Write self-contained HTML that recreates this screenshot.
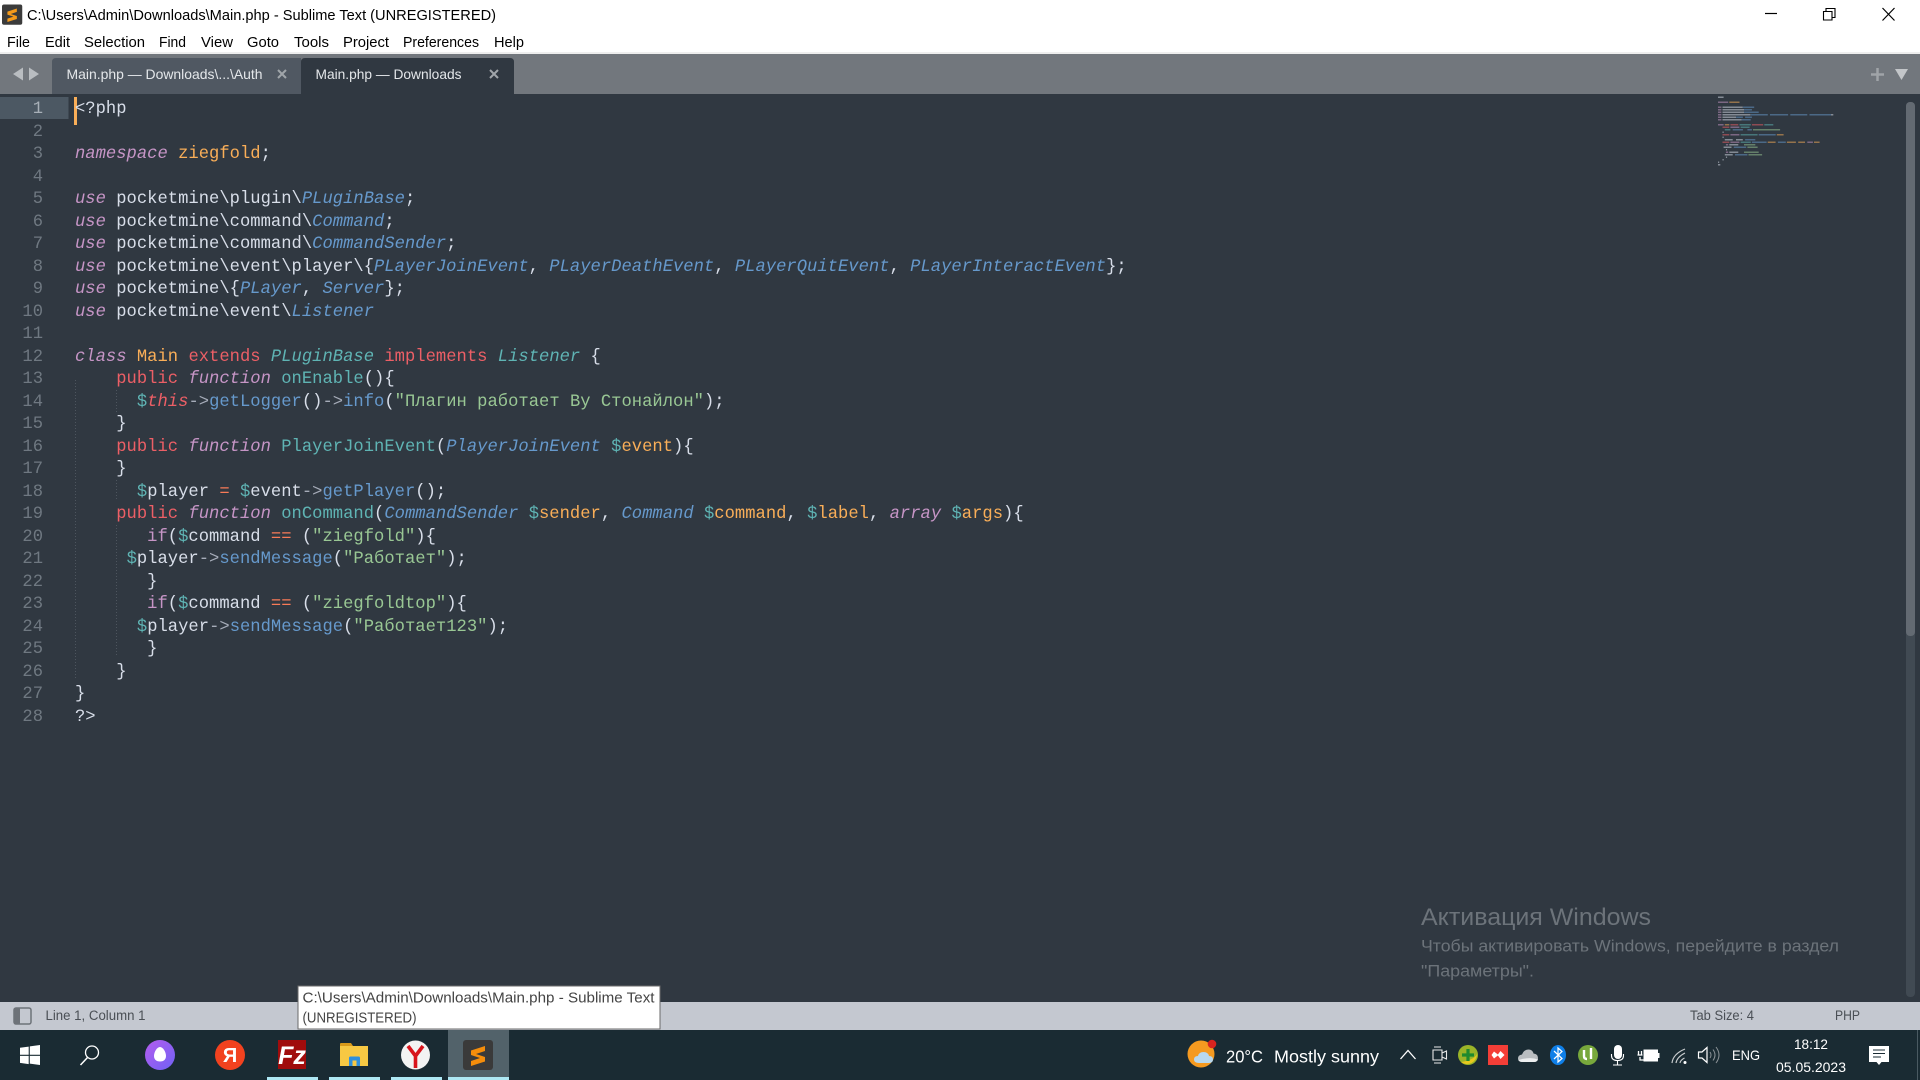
<!DOCTYPE html>
<html lang="ru"><head><meta charset="utf-8"><title>Main.php - Sublime Text</title>
<style>
html,body{margin:0;padding:0;width:1920px;height:1080px;overflow:hidden;background:#303841}
#wrap{position:absolute;left:0;top:0;width:1920px;height:1080px;filter:blur(.35px)}
svg{position:absolute;left:0;top:0}
svg text{font-family:"Liberation Sans","Noto Sans CJK JP",sans-serif}
.l{position:absolute;left:75px;margin-top:2.3px;height:22.5px;white-space:pre;font:17.15px/22.5px "Liberation Mono",monospace;letter-spacing:.024px;color:#d8dee9}
.n{position:absolute;left:0;width:43px;margin-top:2.3px;text-align:right;height:22.5px;font:17.15px/22.5px "Liberation Mono",monospace;color:#6f7881}
.k{color:#c695c6;font-style:italic}.p{color:#c695c6}.b{color:#6699cc;font-style:italic}.f{color:#6699cc}
.t{color:#5fb4b4;font-style:italic}.c{color:#5fb4b4}.r{color:#ec5f66}.ri{color:#ec5f66;font-style:italic}
.o{color:#f9ae58}.g{color:#99c794}.q{color:#f97b58}.a{color:#a6acb9}
</style></head><body><div id="wrap">
<svg width="1920" height="1080" viewBox="0 0 1920 1080">
<rect width="1920" height="52" fill="#fff"/><rect y="52" width="1920" height="2" fill="#eeeeee"/>
<rect y="54" width="1920" height="40" fill="#72777d"/>
<path d="M52 94V62q0-4 4-4H301V94Z" fill="#505862"/>
<path d="M301 94V62q0-4 4-4H510q4 0 4 4V94Z" fill="#303841"/>
<path d="M13 74l10-6.500v13zM39 74l-10-6.500v13z" fill="#b9bdc1"/>
<g fill="#e4e7ea" font-size="14">
<text x="66.500" y="79" textLength="196" lengthAdjust="spacingAndGlyphs">Main.php — Downloads\...\Auth</text>
<text x="315.500" y="79" textLength="146" lengthAdjust="spacingAndGlyphs">Main.php — Downloads</text></g>
<path d="M278 70l8 8m0-8l-8 8M490 70l8 8m0-8l-8 8" stroke="#a0a5aa" stroke-width="2" fill="none"/>
<path d="M1877.500 68v13M1871 74.500h13" stroke="#a0a4a8" stroke-width="2.500"/>
<path d="M1895 69h13l-6.500 11z" fill="#c3c6c9"/>
<!-- title bar -->
<g transform="translate(2,4.500) scale(.675)"><rect width="30" height="30" rx="3" fill="#3b3b3b"/><path d="M8 10.500L22 6V11L13 14L22 17V21.500L8 26V21L17 18L8 15Z" fill="#f59a1a"/></g>
<text x="27" y="20" font-size="14.700" fill="#000" textLength="469" lengthAdjust="spacingAndGlyphs">C:\Users\Admin\Downloads\Main.php - Sublime Text (UNREGISTERED)</text>
<g font-size="14.700" fill="#000">
<text x="7" y="47" textLength="23" lengthAdjust="spacingAndGlyphs">File</text>
<text x="45" y="47" textLength="25" lengthAdjust="spacingAndGlyphs">Edit</text>
<text x="84" y="47" textLength="61" lengthAdjust="spacingAndGlyphs">Selection</text>
<text x="159" y="47" textLength="27" lengthAdjust="spacingAndGlyphs">Find</text>
<text x="201" y="47" textLength="32" lengthAdjust="spacingAndGlyphs">View</text>
<text x="247" y="47" textLength="32" lengthAdjust="spacingAndGlyphs">Goto</text>
<text x="294" y="47" textLength="35" lengthAdjust="spacingAndGlyphs">Tools</text>
<text x="343" y="47" textLength="46" lengthAdjust="spacingAndGlyphs">Project</text>
<text x="403" y="47" textLength="76" lengthAdjust="spacingAndGlyphs">Preferences</text>
<text x="494" y="47" textLength="30" lengthAdjust="spacingAndGlyphs">Help</text></g>
<path d="M1765 13.500h12" stroke="#000" stroke-width="1.200"/>
<path d="M1823.500 11.500h8.500v8.500h-8.500zM1826 11.500V8.500h9v9h-3" fill="none" stroke="#000" stroke-width="1.100"/>
<path d="M1882.500 8l12 12.500m0-12.500l-12 12.500" stroke="#000" stroke-width="1.200"/>
<!-- gutter -->
<rect y="97" width="68.500" height="22" fill="#4c5863"/>
<path d="M75.500 380V680M116.500 390V412M116.500 480V500M116.500 525V657" stroke="#4d555e" stroke-width="1" stroke-dasharray="1 2" fill="none"/>
<rect x="74" y="97" width="3" height="28" fill="#f9ae58"/>
<!-- scrollbar -->
<rect x="1906" y="102" width="9" height="895" rx="4" fill="#414a53"/>
<rect x="1906" y="102" width="9" height="534" rx="4" fill="#636a72"/>
<!-- minimap -->
<g id="mm" opacity=".5" transform="translate(1718,96.500)">
<g fill="#d8dee9"><rect width="5.600" height="1.500"/><rect x="4.500" y="10" width="20.300" height="1.500"/><rect x="4.500" y="12.500" width="21.500" height="1.500"/><rect x="4.500" y="15" width="21.500" height="1.500"/><rect x="4.500" y="17.500" width="28" height="1.500"/><rect x="113" y="17.500" width="2.300" height="1.500"/><rect x="4.500" y="20" width="13.600" height="1.500"/><rect x="4.500" y="22.500" width="19.200" height="1.500"/><rect x="4.500" y="30" width="1.200" height="1.500"/><rect x="4.500" y="35" width="1.200" height="1.500"/><rect x="4.500" y="40" width="1.200" height="1.500"/><rect x="6.800" y="42.500" width="7.900" height="1.500"/><rect x="18" y="42.500" width="6.800" height="1.500"/><rect x="11.300" y="47.500" width="9" height="1.500"/><rect x="5.600" y="50" width="7.900" height="1.500"/><rect x="7.900" y="52.500" width="1.200" height="1.500"/><rect x="11.300" y="55" width="9" height="1.500"/><rect x="6.800" y="57.500" width="7.900" height="1.500"/><rect x="7.900" y="60" width="1.200" height="1.500"/><rect x="4.500" y="62.500" width="1.200" height="1.500"/><rect y="65" width="1.200" height="1.500"/><rect y="67.500" width="2.300" height="1.500"/></g>
<g fill="#c695c6"><rect y="5" width="10.200" height="1.500"/><rect y="10" width="3.400" height="1.500"/><rect y="12.500" width="3.400" height="1.500"/><rect y="15" width="3.400" height="1.500"/><rect y="17.500" width="3.400" height="1.500"/><rect y="20" width="3.400" height="1.500"/><rect y="22.500" width="3.400" height="1.500"/><rect y="27.500" width="5.600" height="1.500"/><rect x="12.400" y="30" width="9" height="1.500"/><rect x="12.400" y="37.500" width="9" height="1.500"/><rect x="12.400" y="45" width="9" height="1.500"/><rect x="89.300" y="45" width="5.600" height="1.500"/><rect x="7.900" y="47.500" width="2.300" height="1.500"/><rect x="7.900" y="55" width="2.300" height="1.500"/></g>
<g fill="#f9ae58"><rect x="11.300" y="5" width="10.200" height="1.500"/><rect x="6.800" y="27.500" width="4.500" height="1.500"/><rect x="58.800" y="37.500" width="6.800" height="1.500"/><rect x="49.700" y="45" width="7.900" height="1.500"/><rect x="68.900" y="45" width="9" height="1.500"/><rect x="80.200" y="45" width="6.800" height="1.500"/><rect x="96" y="45" width="5.600" height="1.500"/></g>
<g fill="#6699cc"><rect x="24.900" y="10" width="11.300" height="1.500"/><rect x="26" y="12.500" width="7.900" height="1.500"/><rect x="26" y="15" width="14.700" height="1.500"/><rect x="32.800" y="17.500" width="17" height="1.500"/><rect x="52" y="17.500" width="18.100" height="1.500"/><rect x="72.300" y="17.500" width="17" height="1.500"/><rect x="91.500" y="17.500" width="21.500" height="1.500"/><rect x="18.100" y="20" width="6.800" height="1.500"/><rect x="27.100" y="20" width="6.800" height="1.500"/><rect x="23.700" y="22.500" width="9" height="1.500"/><rect x="14.700" y="32.500" width="10.200" height="1.500"/><rect x="29.400" y="32.500" width="4.500" height="1.500"/><rect x="40.700" y="37.500" width="17" height="1.500"/><rect x="27.100" y="42.500" width="10.200" height="1.500"/><rect x="33.900" y="45" width="14.700" height="1.500"/><rect x="59.900" y="45" width="7.900" height="1.500"/><rect x="15.800" y="50" width="12.400" height="1.500"/><rect x="17" y="57.500" width="12.400" height="1.500"/></g>
<g fill="#5fb4b4"><rect x="21.500" y="27.500" width="11.300" height="1.500"/><rect x="46.300" y="27.500" width="9" height="1.500"/><rect x="22.600" y="30" width="9" height="1.500"/><rect x="6.800" y="32.500" width="5.600" height="1.500"/><rect x="22.600" y="37.500" width="17" height="1.500"/><rect x="22.600" y="45" width="10.200" height="1.500"/></g>
<g fill="#ec5f66"><rect x="12.400" y="27.500" width="7.900" height="1.500"/><rect x="33.900" y="27.500" width="11.300" height="1.500"/><rect x="4.500" y="30" width="6.800" height="1.500"/><rect x="4.500" y="37.500" width="6.800" height="1.500"/><rect x="4.500" y="45" width="6.800" height="1.500"/></g>
<g fill="#99c794"><rect x="35" y="32.500" width="27.100" height="1.500"/><rect x="26" y="47.500" width="11.300" height="1.500"/><rect x="29.400" y="50" width="10.200" height="1.500"/><rect x="26" y="55" width="14.700" height="1.500"/><rect x="30.500" y="57.500" width="13.600" height="1.500"/></g>
</g>
<!-- watermark -->
<g fill="#6c737a"><text x="1421" y="925" font-size="24" textLength="230" lengthAdjust="spacingAndGlyphs">Активация Windows</text>
<text x="1421" y="951.500" font-size="17" textLength="418" lengthAdjust="spacingAndGlyphs">Чтобы активировать Windows, перейдите в раздел</text>
<text x="1421" y="976.500" font-size="17" textLength="113" lengthAdjust="spacingAndGlyphs">"Параметры".</text></g>
<!-- status bar -->
<rect y="1002" width="1920" height="28" fill="#c4c8d0"/>
<rect x="14" y="1008" width="17" height="16" rx="2" fill="none" stroke="#6d7278" stroke-width="1.500"/><rect x="14" y="1008" width="6" height="16" rx="1" fill="#6d7278"/>
<g fill="#4a4f55" font-size="13.500"><text x="45.500" y="1020" textLength="100" lengthAdjust="spacingAndGlyphs">Line 1, Column 1</text>
<text x="1690" y="1020" textLength="64" lengthAdjust="spacingAndGlyphs">Tab Size: 4</text>
<text x="1835" y="1020" textLength="25" lengthAdjust="spacingAndGlyphs">PHP</text></g>
<!-- taskbar -->
<rect y="1030" width="1920" height="50" fill="#1a2b33"/>
<rect x="448" y="1030" width="61" height="50" fill="#52626a"/>
<g fill="#aee8f4"><rect x="267" y="1077" width="51" height="3"/><rect x="329" y="1077" width="51" height="3"/><rect x="391" y="1077" width="51" height="3"/><rect x="448" y="1077" width="61" height="3"/></g>
<path d="M20 1047.800l8.700-1.200v8.200H20zM29.800 1046.400L40 1045v9.800H29.800zM20 1055.900h8.700v8.200l-8.700-1.200zM29.800 1055.900H40V1065l-10.200-1.400z" fill="#fff"/>
<circle cx="92" cy="1052.500" r="6.500" fill="none" stroke="#fff" stroke-width="1.300"/><path d="M87.500 1057.500L80.500 1065" stroke="#fff" stroke-width="1.500"/>
<defs><linearGradient id="al" x1="0" y1="0" x2="1" y2="1"><stop offset="0" stop-color="#b45cee"/><stop offset="1" stop-color="#6f62f5"/></linearGradient></defs>
<ellipse cx="160" cy="1055" rx="15" ry="15" fill="url(#al)"/><path d="M160 1047c3 0 6 5 6 9s-3 5.500-6 5.500-6-1.500-6-5.500 3-9 6-9z" fill="#fff"/>
<circle cx="230" cy="1055" r="15" fill="#f2421f"/><text x="230" y="1062" font-size="20" font-weight="bold" fill="#fff" text-anchor="middle">Я</text>
<rect x="278" y="1040" width="28" height="29" fill="#a00c0c"/><text x="292" y="1064" font-size="25" font-weight="bold" font-style="italic" fill="#fff" text-anchor="middle">Fz</text>
<path d="M340 1044q0-1 1-1h10l2 3h-13z" fill="#d99a1a"/><rect x="340" y="1046" width="28" height="20" fill="#f7c843"/><path d="M349 1066v-8q0-1.500 1.500-1.500h8q1.500 0 1.500 1.500v8h-3.500v-5.500h-4v5.500z" fill="#2f8fdc"/>
<circle cx="415.500" cy="1055" r="14.500" fill="#f3f3f3"/><path d="M408 1046l7.500 10 7.500-10M415.500 1056v12" fill="none" stroke="#d8141c" stroke-width="3.600"/>
<g transform="translate(463,1040)"><rect width="30" height="30" rx="3" fill="#3a3a3a"/><path d="M8 10.500L22 6V11L13 14L22 17V21.500L8 26V21L17 18L8 15Z" fill="#f58d0b"/></g>
<!-- tray -->
<circle cx="1201" cy="1054" r="13.500" fill="#f59a20"/><circle cx="1212" cy="1044" r="4.300" fill="#d8241f"/>
<path d="M1199 1063q-5 0-5-3.500t4-3.500q1-4 5.500-4t5.500 4q4 0 4 3.500t-4 3.500z" fill="#b8d8ee"/>
<g fill="#fff"><text x="1226" y="1062.500" font-size="17.500" textLength="37" lengthAdjust="spacingAndGlyphs">20°C</text>
<text x="1274" y="1062.500" font-size="17.500" textLength="105" lengthAdjust="spacingAndGlyphs">Mostly sunny</text>
<text x="1732" y="1060" font-size="14" textLength="28" lengthAdjust="spacingAndGlyphs">ENG</text>
<text x="1794" y="1049" font-size="14" textLength="34" lengthAdjust="spacingAndGlyphs">18:12</text>
<text x="1776" y="1072" font-size="14" textLength="70" lengthAdjust="spacingAndGlyphs">05.05.2023</text></g>
<path d="M1400.500 1059l7.500-8.500 7.500 8.500" fill="none" stroke="#fff" stroke-width="1.300"/>
<path d="M1433 1050h9v10h-9zM1442 1053l4.500-2v8l-4.500-2M1434 1047h7M1434 1063h7" fill="none" stroke="#e8e8e8" stroke-width="1.100"/>
<circle cx="1468" cy="1055" r="10" fill="#9ab428"/><path d="M1461 1062a10 10 0 0 0 16-8q-3 6-16 8z" fill="#e8c81e"/><path d="M1468 1049v12M1462 1055h12" stroke="#1e8a2e" stroke-width="3.200"/>
<rect x="1488" y="1045" width="20" height="20" fill="#f43e37"/><path d="M1494 1051.500l4.500 3.500-4.500 3.500-2.500-3.500zM1500.500 1051l4 4-4 4-3-4z" fill="#fff"/>
<path d="M1522 1062q-4 0-4-3.500t4-4q2-5 6.500-5 4 0 5 4 4.500.5 4.500 4.500t-4 4z" fill="#b9bdc0"/><path d="M1518.500 1060q1 2 4 2h11.500q3 0 4-2.500-8-3-19.500.5z" fill="#eceeef"/>
<ellipse cx="1558" cy="1055" rx="8" ry="10" fill="#0f7fe8"/><path d="M1554 1051l8 7.500-4 3.500v-14l4 3.500-8 7.500" fill="none" stroke="#fff" stroke-width="1.200"/>
<circle cx="1588" cy="1055" r="10" fill="#78a83c"/><path d="M1584 1050v6q0 3 3 3M1591 1048v11" fill="none" stroke="#fff" stroke-width="2.400"/>
<rect x="1614" y="1045" width="8" height="14" rx="4" fill="#fff"/><path d="M1611.500 1054v1.500q0 5 6 5t6-5V1054M1617.500 1060.500v4M1613 1065h9" fill="none" stroke="#fff" stroke-width="1.100"/>
<path d="M1638.500 1051v4M1641.500 1051v4M1637.500 1055h5M1640 1057v3h4" fill="none" stroke="#fff" stroke-width="1.300"/><rect x="1644" y="1050" width="13" height="11" fill="#fff"/><rect x="1644" y="1050" width="13.500" height="11" fill="none" stroke="#fff"/><rect x="1658" y="1053" width="1.500" height="5" fill="#fff"/>
<path d="M1672 1063q1-9 13-14M1676 1063q1-6 9-10M1680 1063q.5-3 4.500-5" fill="none" stroke="#c9cdcf" stroke-width="1.200"/><circle cx="1685" cy="1062.500" r="1.500" fill="#fff"/>
<path d="M1698.500 1052h3.500l5-4.500v15l-5-4.500h-3.500z" fill="none" stroke="#fff" stroke-width="1.200"/><path d="M1710 1052q2 3 0 6M1713 1049.500q4 5.500 0 11M1716 1047q6 8 0 16" fill="none" stroke="#8a9196" stroke-width="1"/>
<path d="M1869 1046h20v16h-7.500l-2.500 3-2.500-3h-7.500z" fill="#fff"/><path d="M1873 1050h12M1873 1053.500h12M1873 1057h8" stroke="#1a2b33" stroke-width="1"/>
<rect x="1917" y="1030" width="1" height="50" fill="#4a5a62"/>
</svg>
<div class="n" style="top:96.75px;color:#a8b0b8">1</div><div class="n" style="top:119.25px">2</div><div class="n" style="top:141.75px">3</div><div class="n" style="top:164.25px">4</div><div class="n" style="top:186.75px">5</div><div class="n" style="top:209.25px">6</div><div class="n" style="top:231.75px">7</div><div class="n" style="top:254.25px">8</div><div class="n" style="top:276.75px">9</div><div class="n" style="top:299.25px">10</div><div class="n" style="top:321.75px">11</div><div class="n" style="top:344.25px">12</div><div class="n" style="top:366.75px">13</div><div class="n" style="top:389.25px">14</div><div class="n" style="top:411.75px">15</div><div class="n" style="top:434.25px">16</div><div class="n" style="top:456.75px">17</div><div class="n" style="top:479.25px">18</div><div class="n" style="top:501.75px">19</div><div class="n" style="top:524.25px">20</div><div class="n" style="top:546.75px">21</div><div class="n" style="top:569.25px">22</div><div class="n" style="top:591.75px">23</div><div class="n" style="top:614.25px">24</div><div class="n" style="top:636.75px">25</div><div class="n" style="top:659.25px">26</div><div class="n" style="top:681.75px">27</div><div class="n" style="top:704.25px">28</div>
<div class="l" style="top:96.75px">&lt;?php</div>
<div class="l" style="top:141.75px"><span class="k">namespace</span> <span class="o">ziegfold</span>;</div>
<div class="l" style="top:186.75px"><span class="k">use</span> pocketmine\plugin\<span class="b">PLuginBase</span>;</div>
<div class="l" style="top:209.25px"><span class="k">use</span> pocketmine\command\<span class="b">Command</span>;</div>
<div class="l" style="top:231.75px"><span class="k">use</span> pocketmine\command\<span class="b">CommandSender</span>;</div>
<div class="l" style="top:254.25px"><span class="k">use</span> pocketmine\event\player\{<span class="b">PLayerJoinEvent</span>, <span class="b">PLayerDeathEvent</span>, <span class="b">PLayerQuitEvent</span>, <span class="b">PLayerInteractEvent</span>};</div>
<div class="l" style="top:276.75px"><span class="k">use</span> pocketmine\{<span class="b">PLayer</span>, <span class="b">Server</span>};</div>
<div class="l" style="top:299.25px"><span class="k">use</span> pocketmine\event\<span class="b">Listener</span></div>
<div class="l" style="top:344.25px"><span class="k">class</span> <span class="o">Main</span> <span class="r">extends</span> <span class="t">PLuginBase</span> <span class="r">implements</span> <span class="t">Listener</span> {</div>
<div class="l" style="top:366.75px">    <span class="r">public</span> <span class="k">function</span> <span class="c">onEnable</span>(){</div>
<div class="l" style="top:389.25px">      <span class="c">$</span><span class="ri">this</span><span class="a">-&gt;</span><span class="f">getLogger</span>()<span class="a">-&gt;</span><span class="f">info</span>(<span class="g">"Плагин работает By Стонайлон"</span>);</div>
<div class="l" style="top:411.75px">    }</div>
<div class="l" style="top:434.25px">    <span class="r">public</span> <span class="k">function</span> <span class="c">PlayerJoinEvent</span>(<span class="b">PlayerJoinEvent</span> <span class="c">$</span><span class="o">event</span>){</div>
<div class="l" style="top:456.75px">    }</div>
<div class="l" style="top:479.25px">      <span class="c">$</span>player <span class="q">=</span> <span class="c">$</span>event<span class="a">-&gt;</span><span class="f">getPlayer</span>();</div>
<div class="l" style="top:501.75px">    <span class="r">public</span> <span class="k">function</span> <span class="c">onCommand</span>(<span class="b">CommandSender</span> <span class="c">$</span><span class="o">sender</span>, <span class="b">Command</span> <span class="c">$</span><span class="o">command</span>, <span class="c">$</span><span class="o">label</span>, <span class="k">array</span> <span class="c">$</span><span class="o">args</span>){</div>
<div class="l" style="top:524.25px">       <span class="p">if</span>(<span class="c">$</span>command <span class="q">==</span> (<span class="g">"ziegfold"</span>){</div>
<div class="l" style="top:546.75px">     <span class="c">$</span>player<span class="a">-&gt;</span><span class="f">sendMessage</span>(<span class="g">"Работает"</span>);</div>
<div class="l" style="top:569.25px">       }</div>
<div class="l" style="top:591.75px">       <span class="p">if</span>(<span class="c">$</span>command <span class="q">==</span> (<span class="g">"ziegfoldtop"</span>){</div>
<div class="l" style="top:614.25px">      <span class="c">$</span>player<span class="a">-&gt;</span><span class="f">sendMessage</span>(<span class="g">"Работает123"</span>);</div>
<div class="l" style="top:636.75px">       }</div>
<div class="l" style="top:659.25px">    }</div>
<div class="l" style="top:681.75px">}</div>
<div class="l" style="top:704.25px">?&gt;</div>
<svg width="1920" height="1080" viewBox="0 0 1920 1080" style="pointer-events:none">
<rect x="298" y="986" width="362" height="43" fill="#fff" stroke="#6a6a6a" stroke-width="1"/>
<g fill="#444" font-size="14.300"><text x="302.500" y="1002.500" textLength="352" lengthAdjust="spacingAndGlyphs">C:\Users\Admin\Downloads\Main.php - Sublime Text</text>
<text x="302.500" y="1022.500" textLength="114" lengthAdjust="spacingAndGlyphs">(UNREGISTERED)</text></g>
</svg>
</div></body></html>
